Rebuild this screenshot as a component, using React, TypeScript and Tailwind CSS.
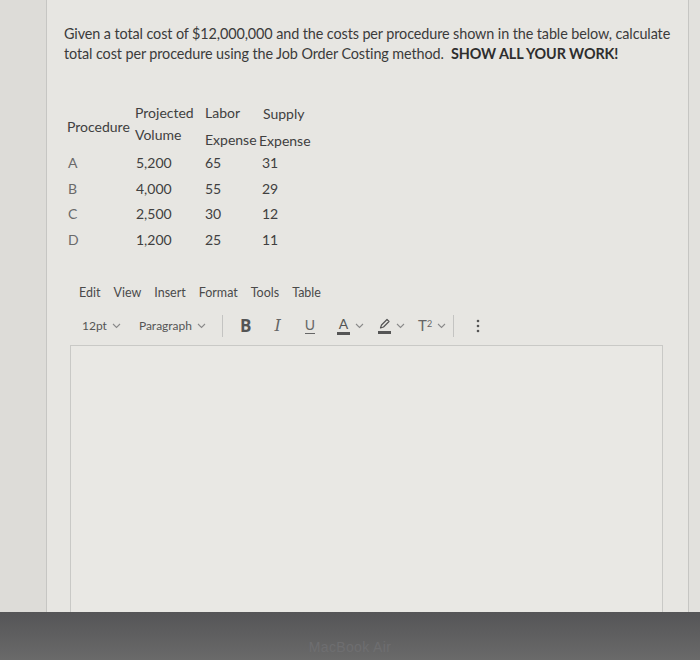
import React from "react";

const rows = [
  { p: "A", vol: "5,200", labor: "65", supply: "31" },
  { p: "B", vol: "4,000", labor: "55", supply: "29" },
  { p: "C", vol: "2,500", labor: "30", supply: "12" },
  { p: "D", vol: "1,200", labor: "25", supply: "11" },
];

function Chevron() {
  return (
    <svg width="9" height="6" viewBox="0 0 9 6" className="ml-[5px] mt-[1px] shrink-0">
      <path d="M1 1l3.5 3.5L8 1" fill="none" stroke="#8a8a8a" strokeWidth="1.1" />
    </svg>
  );
}

export default function App() {
  return (
    <div
      className="flex flex-col h-[660px] w-[700px] overflow-hidden bg-[#dcdbd7] text-[#3b3b3b]"
      style={{ fontFamily: "Lato, 'Open Sans', sans-serif" }}
    >
      <div className="flex flex-1 min-h-0">
        <div className="w-[46px] shrink-0 bg-[#dddcd8]" />
        <div className="flex-1 flex flex-col bg-[#e7e6e2] border-l border-r border-[#c6c6c3]">
          {/* question */}
          <div className="pl-[17px] pt-[24px] text-[14.4px] leading-[20px] tracking-[-0.1px] whitespace-nowrap">
            Given a total cost of $12,000,000 and the costs per procedure shown in the table below, calculate
            <br />
            total cost per procedure using the Job Order Costing method.&nbsp; <b className="font-bold text-[#2e2e2e]">SHOW ALL YOUR WORK!</b>
          </div>

          {/* table */}
          <div className="mt-[37px] ml-[20px] text-[14px] text-[#404040]">
            <div className="flex h-[50px]">
              <div className="w-[68px] flex items-center">Procedure</div>
              <div className="w-[70px] flex flex-col leading-[22px] pt-[1px]">
                <span>Projected</span>
                <span>Volume</span>
              </div>
              <div className="w-[54px] flex flex-col leading-[27px] -mt-[2px]">
                <span>Labor</span>
                <span>Expense</span>
              </div>
              <div className="flex flex-col leading-[27px] -mt-[1px]">
                <span className="pl-[4px]">Supply</span>
                <span>Expense</span>
              </div>
            </div>
            <div className="-mt-[1px]">
              {rows.map((r) => (
                <div key={r.p} className="flex h-[25.5px] items-center">
                  <div className="w-[68px] text-[#6a6a6a] pl-[1px]">{r.p}</div>
                  <div className="w-[70px] pl-[1px]">{r.vol}</div>
                  <div className="w-[54px]">{r.labor}</div>
                  <div className="pl-[3px]">{r.supply}</div>
                </div>
              ))}
            </div>
          </div>

          {/* menu */}
          <div className="mt-[32px] ml-[32px] flex gap-[13px] text-[12.5px] text-[#4a4a4a]">
            <span>Edit</span>
            <span>View</span>
            <span>Insert</span>
            <span>Format</span>
            <span>Tools</span>
            <span>Table</span>
          </div>

          {/* toolbar */}
          <div className="mt-[12px] ml-[35px] flex items-center h-[22px] text-[12px] text-[#555]">
            <span>12pt</span>
            <Chevron />
            <span className="ml-[18px]">Paragraph</span>
            <Chevron />
            <div className="ml-[16px] w-px h-[22px] bg-[#c4c4c2]" />
            <span
              className="ml-[17px] text-[17px] font-bold text-[#555] leading-none"
              style={{ fontFamily: "'Open Sans', 'Liberation Sans', sans-serif" }}
            >
              B
            </span>
            <span className="ml-[23px] text-[16px] italic text-[#666] leading-none" style={{ fontFamily: "'DejaVu Serif', serif" }}>
              I
            </span>
            <span className="ml-[24px] flex flex-col items-center leading-none">
              <span className="text-[14px] text-[#666]">U</span>
              <span className="w-[10px] h-px bg-[#666] mt-[1px]" />
            </span>
            <span className="ml-[22px] flex flex-col items-center leading-none">
              <span className="text-[14px] text-[#555]">A</span>
              <span className="w-[13px] h-[3px] bg-[#555] mt-[1px]" />
            </span>
            <Chevron />
            <span className="ml-[14px] flex flex-col items-center">
              <svg width="13" height="12" viewBox="0 0 13 12">
                <path d="M2.5 10l1-3L9 1.5l2 2L5.5 9z" fill="none" stroke="#555" strokeWidth="1.2" strokeLinejoin="round" />
              </svg>
              <span className="w-[13px] h-[3px] bg-[#555] mt-[1px]" />
            </span>
            <Chevron />
            <span className="ml-[13px] text-[15px] text-[#666] leading-none">
              T<sup className="text-[9px]">2</sup>
            </span>
            <Chevron />
            <div className="ml-[7px] w-px h-[22px] bg-[#c4c4c2]" />
            <svg width="4" height="14" viewBox="0 0 4 14" className="ml-[22px]">
              <circle cx="2" cy="2" r="1.3" fill="#555" />
              <circle cx="2" cy="7" r="1.3" fill="#555" />
              <circle cx="2" cy="12" r="1.3" fill="#555" />
            </svg>
          </div>

          {/* editor */}
          <div className="flex-1 mt-[8px] ml-[23px] mr-[25px] border-l border-t border-r border-[#c9c9c6] bg-[#e9e8e4]" />
        </div>
        <div className="w-[11px] shrink-0 bg-[#e2e1dd]" />
      </div>
      <div className="h-[48px] shrink-0 bg-gradient-to-b from-[#555557] to-[#6a6a6a] flex items-end justify-center pb-[2px]">
        <span className="text-[14px] text-[#6e6e70] tracking-wide" style={{ fontFamily: "'Liberation Sans', sans-serif" }}>
          MacBook Air
        </span>
      </div>
    </div>
  );
}
